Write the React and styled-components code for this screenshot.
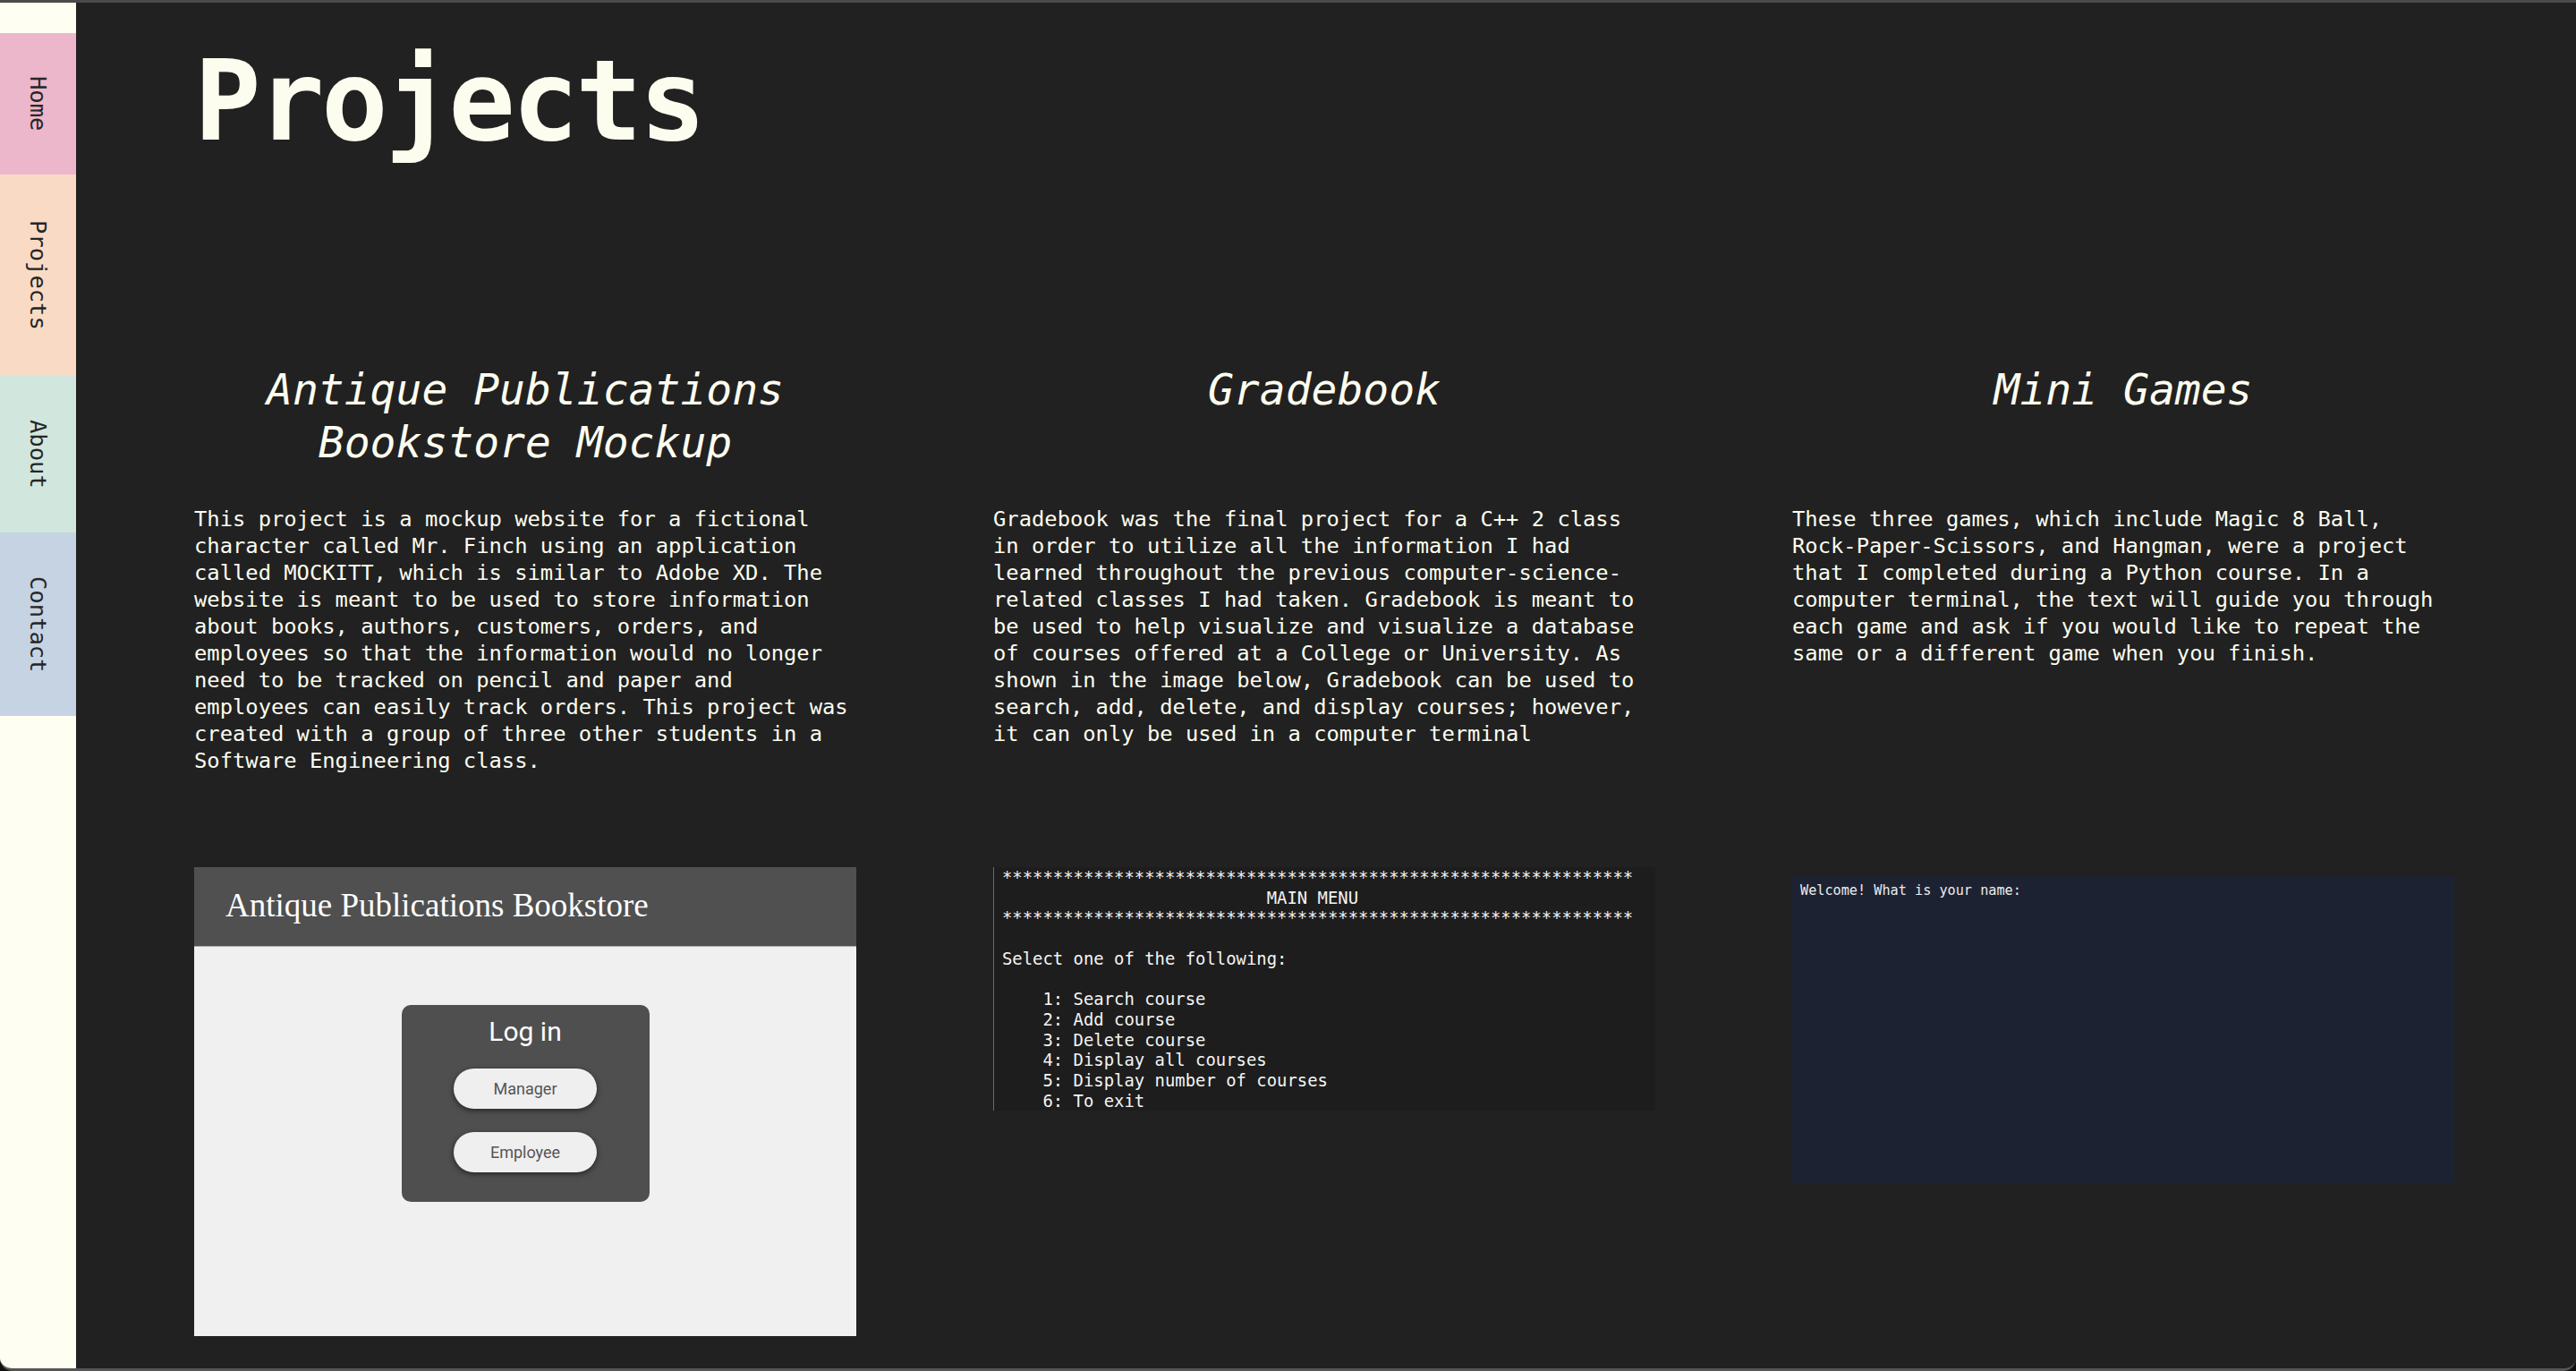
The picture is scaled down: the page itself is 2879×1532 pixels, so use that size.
import React from "react";
import styled, { createGlobalStyle } from "styled-components";

const GlobalStyle = createGlobalStyle`
  html, body {
    margin: 0;
    padding: 0;
    background: #111;
  }
  * {
    box-sizing: border-box;
  }
`;

const mono = `"DejaVu Sans Mono", "Liberation Mono", monospace`;

const navItems = [
  { label: "Home", bg: "#ecb7cb", h: 158 },
  { label: "Projects", bg: "#f9dbc5", h: 224 },
  { label: "About", bg: "#d1e7de", h: 176 },
  { label: "Contact", bg: "#c5d3e2", h: 205 },
];

const projects = [
  {
    id: 1,
    title: "Antique Publications Bookstore Mockup",
    text:
      "This project is a mockup website for a fictional character called Mr. Finch using an application called MOCKITT, which is similar to Adobe XD. The website is meant to be used to store information about books, authors, customers, orders, and employees so that the information would no longer need to be tracked on pencil and paper and employees can easily track orders. This project was created with a group of three other students in a Software Engineering class.",
    preview: "bookstore",
  },
  {
    id: 2,
    title: "Gradebook",
    text:
      "Gradebook was the final project for a C++ 2 class in order to utilize all the information I had learned throughout the previous computer-science-related classes I had taken. Gradebook is meant to be used to help visualize and visualize a database of courses offered at a College or University. As shown in the image below, Gradebook can be used to search, add, delete, and display courses; however, it can only be used in a computer terminal",
    preview: "gradebook",
  },
  {
    id: 3,
    title: "Mini Games",
    text:
      "These three games, which include Magic 8 Ball, Rock-Paper-Scissors, and Hangman, were a project that I completed during a Python course. In a computer terminal, the text will guide you through each game and ask if you would like to repeat the same or a different game when you finish.",
    preview: "games",
  },
];

const stars = "*".repeat(62);
const gradebookOutput = [
  stars,
  " ".repeat(26) + "MAIN MENU",
  stars,
  "",
  "Select one of the following:",
  "",
  "    1: Search course",
  "    2: Add course",
  "    3: Delete course",
  "    4: Display all courses",
  "    5: Display number of courses",
  "    6: To exit",
].join("\n");

// Layout
const Window = styled.div`
  display: flex;
  height: 1532px;
  border-top: 3px solid #4a4a4a;
  border-bottom: 3px solid #555;
  border-radius: 0 0 14px 14px;
  overflow: hidden;
  background: #212121;
`;

const Sidebar = styled.nav`
  width: 85px;
  flex-shrink: 0;
  background: #fefff2;
  padding-top: 34px;
  display: flex;
  flex-direction: column;
`;

const Tab = styled.a`
  display: flex;
  align-items: center;
  justify-content: center;
  height: ${(p) => p.$h}px;
  background: ${(p) => p.$bg};
  color: #262626;
  font-family: ${mono};
  font-size: 25.5px;
  writing-mode: vertical-rl;
  text-decoration: none;
`;

const Main = styled.main`
  flex: 1;
  padding: 48px 134px 0 132px;
  color: #fdfdef;
  font-family: ${mono};
`;

const PageTitle = styled.h1`
  margin: 0;
  font-size: 124px;
  line-height: 124px;
  font-weight: bold;
  letter-spacing: -3.6px;
  color: #fdfdef;
`;

const Grid = styled.section`
  display: grid;
  grid-template-columns: repeat(3, 740px);
  column-gap: 153px;
  margin-top: 231px;
`;

const Column = styled.article`
  display: flex;
  flex-direction: column;
`;

const ProjectTitle = styled.h2`
  margin: 0;
  height: 159px;
  font-size: 48px;
  line-height: 59px;
  font-style: italic;
  font-weight: normal;
  text-align: center;
`;

const Description = styled.p`
  margin: 0;
  height: 404px;
  font-size: 23.8px;
  line-height: 30px;
`;

// Bookstore mockup preview
const Mockup = styled.div`
  height: 524px;
  background: #f0f0f0;
  display: flex;
  flex-direction: column;
`;

const MockHeader = styled.div`
  height: 89px;
  padding: 24px 0 0 35px;
  background: #505050;
  border-bottom: 1px solid #a8a8a8;
  color: #fff;
  font-family: "Liberation Serif", "Times New Roman", serif;
  font-size: 37px;
  line-height: 37px;
`;

const MockBody = styled.div`
  flex: 1;
  display: flex;
  justify-content: center;
  align-items: flex-start;
  padding-top: 65px;
`;

const LoginCard = styled.div`
  width: 277px;
  height: 220px;
  padding: 15px 0 0;
  background: #4f4f4f;
  border-radius: 10px;
  display: flex;
  flex-direction: column;
  align-items: center;
  gap: 26px;
  font-family: Roboto, "Liberation Sans", sans-serif;
`;

const LoginTitle = styled.div`
  color: #fff;
  font-size: 30px;
  line-height: 30px;
`;

const PillButton = styled.button`
  width: 160px;
  height: 45px;
  border: none;
  border-radius: 23px;
  background: #efefef;
  color: #555;
  font-family: Roboto, "Liberation Sans", sans-serif;
  font-size: 18px;
  box-shadow: 0 2px 6px rgba(0, 0, 0, 0.55);
`;

// Terminal previews
const Terminal = styled.pre`
  margin: ${(p) => (p.$navy ? "10px 0 0" : "0")};
  height: ${(p) => p.$height}px;
  padding: ${(p) => (p.$navy ? "6px 9px" : "0 0 0 9px")};
  background: ${(p) => (p.$navy ? "#1d2233" : "#1d1d1d")};
  border-left: ${(p) => (p.$navy ? "none" : "1px solid #6a6a6a")};
  color: ${(p) => (p.$navy ? "#ececec" : "#f4f4f4")};
  font-family: ${mono};
  font-size: ${(p) => p.$size}px;
  line-height: ${(p) => p.$line}px;
  white-space: pre;
  overflow: hidden;
`;

const Preview = ({ kind }) => {
  if (kind === "bookstore") {
    return (
      <Mockup>
        <MockHeader>Antique Publications Bookstore</MockHeader>
        <MockBody>
          <LoginCard>
            <LoginTitle>Log in</LoginTitle>
            <PillButton>Manager</PillButton>
            <PillButton>Employee</PillButton>
          </LoginCard>
        </MockBody>
      </Mockup>
    );
  }
  if (kind === "gradebook") {
    return (
      <Terminal $height={272} $size={18.9} $line={22.7}>
        {gradebookOutput}
      </Terminal>
    );
  }
  return (
    <Terminal $navy $height={343} $size={15.2} $line={20}>
      Welcome! What is your name:
    </Terminal>
  );
};

const App = () => {
  return (
    <>
      <GlobalStyle />
      <Window>
        <Sidebar>
          {navItems.map((item) => (
            <Tab key={item.label} $bg={item.bg} $h={item.h}>
              {item.label}
            </Tab>
          ))}
        </Sidebar>
        <Main>
          <PageTitle>Projects</PageTitle>
          <Grid>
            {projects.map((project) => (
              <Column key={project.id}>
                <ProjectTitle>{project.title}</ProjectTitle>
                <Description>{project.text}</Description>
                <Preview kind={project.preview} />
              </Column>
            ))}
          </Grid>
        </Main>
      </Window>
    </>
  );
};

export default App;
